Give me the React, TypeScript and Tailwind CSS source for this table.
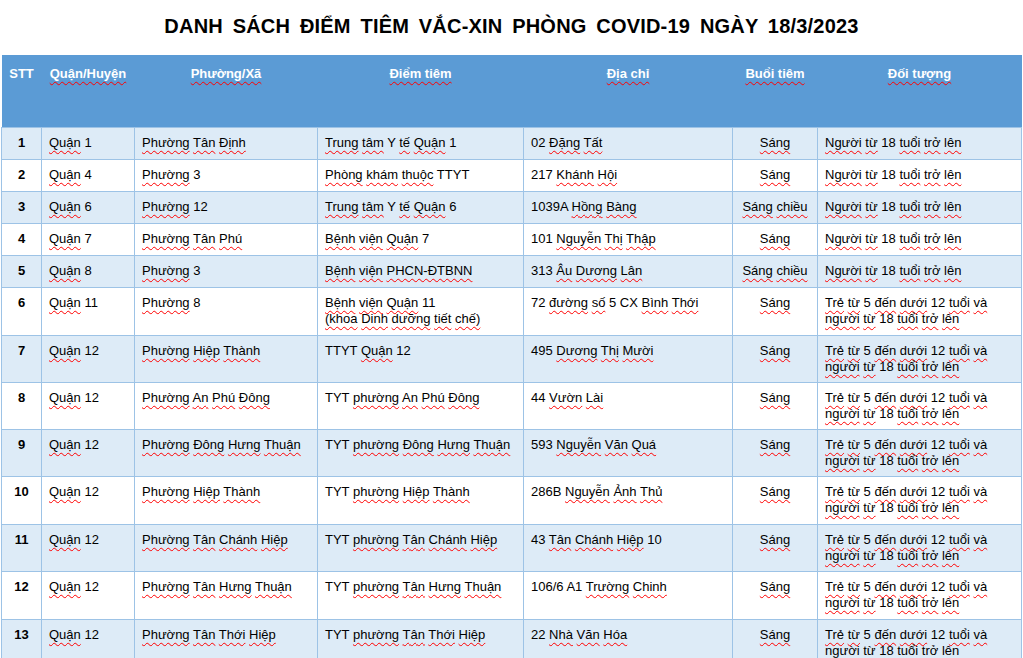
import React from "react";

const W = (text: string) => {
  const tokens = text.split(/(\s+)/);
  return tokens.map((t, i) => {
    if (/^\s+$/.test(t) || t === "") return <React.Fragment key={i}>{t}</React.Fragment>;
    const hasLower = /[a-zà-ỹđ]/.test(t);
    if (hasLower) {
      return (
        <span
          key={i}
          className="underline decoration-wavy decoration-[#ff0000] decoration-[1px] underline-offset-[3px]"
        >
          {t}
        </span>
      );
    }
    return <React.Fragment key={i}>{t}</React.Fragment>;
  });
};

type Row = [string, string, string, string[], string, string, string[]];

const A = ["Người từ 18 tuổi trở lên"];
const B = ["Trẻ từ 5 đến dưới 12 tuổi và", "người từ 18 tuổi trở lên"];

const rows: Row[] = [
  ["1", "Quận 1", "Phường Tân Định", ["Trung tâm Y tế Quận 1"], "02 Đặng Tất", "Sáng", A],
  ["2", "Quận 4", "Phường 3", ["Phòng khám thuộc TTYT"], "217 Khánh Hội", "Sáng", A],
  ["3", "Quận 6", "Phường 12", ["Trung tâm Y tế Quận 6"], "1039A Hồng Bàng", "Sáng chiều", A],
  ["4", "Quận 7", "Phường Tân Phú", ["Bệnh viện Quận 7"], "101 Nguyễn Thị Thập", "Sáng", A],
  ["5", "Quận 8", "Phường 3", ["Bệnh viện PHCN-ĐTBNN"], "313 Âu Dương Lân", "Sáng chiều", A],
  ["6", "Quận 11", "Phường 8", ["Bệnh viện Quận 11", "(khoa Dinh dưỡng tiết chế)"], "72 đường số 5 CX Bình Thới", "Sáng", B],
  ["7", "Quận 12", "Phường Hiệp Thành", ["TTYT Quận 12"], "495 Dương Thị Mười", "Sáng", B],
  ["8", "Quận 12", "Phường An Phú Đông", ["TYT phường An Phú Đông"], "44 Vườn Lài", "Sáng", B],
  ["9", "Quận 12", "Phường Đông Hưng Thuận", ["TYT phường Đông Hưng Thuận"], "593 Nguyễn Văn Quá", "Sáng", B],
  ["10", "Quận 12", "Phường Hiệp Thành", ["TYT phường Hiệp Thành"], "286B Nguyễn Ảnh Thủ", "Sáng", B],
  ["11", "Quận 12", "Phường Tân Chánh Hiệp", ["TYT phường Tân Chánh Hiệp"], "43 Tân Chánh Hiệp 10", "Sáng", B],
  ["12", "Quận 12", "Phường Tân Hưng Thuận", ["TYT phường Tân Hưng Thuận"], "106/6 A1 Trường Chinh", "Sáng", B],
  ["13", "Quận 12", "Phường Tân Thới Hiệp", ["TYT phường Tân Thới Hiệp"], "22 Nhà Văn Hóa", "Sáng", B],
];

const heights = [32, 32, 32, 32, 32, 48, 47, 47, 47, 48, 47, 48, 47];

export default function App() {
  const td = "border border-[#9dc3e6] align-top pt-[7px] px-[7px] leading-[16px] whitespace-nowrap";
  return (
    <div className="w-[1023px] h-[658px] overflow-hidden bg-white text-black font-['Liberation_Sans',Arial,sans-serif]">
      <div className="h-[55px] flex items-center justify-center">
        <h1 className="text-[20px] font-bold tracking-[0.2px] [word-spacing:4px] mt-[-4px]">
          DANH SÁCH ĐIỂM TIÊM VẮC-XIN PHÒNG COVID-19 NGÀY 18/3/2023
        </h1>
      </div>
      <table className="ml-[1px] w-[1020px] table-fixed border-collapse text-[13px]">
        <colgroup>
          <col className="w-[40px]" />
          <col className="w-[93px]" />
          <col className="w-[183px]" />
          <col className="w-[206px]" />
          <col className="w-[209px]" />
          <col className="w-[85px]" />
          <col className="w-[204px]" />
        </colgroup>
        <thead>
          <tr className="h-[72px] bg-[#5b9bd5] text-white font-bold">
            {["STT", "Quận/Huyện", "Phường/Xã", "Điểm tiêm", "Địa chỉ", "Buổi tiêm", "Đối tượng"].map((h, i) => (
              <th key={i} className="align-top pt-[11px] text-center leading-[16px] font-bold border-0">
                {i === 0 ? h : (
                  <span className="underline decoration-wavy decoration-[#ff0000] decoration-[1px] underline-offset-[3px]">{h}</span>
                )}
              </th>
            ))}
          </tr>
        </thead>
        <tbody>
          {rows.map((r, idx) => (
            <tr
              key={idx}
              style={{ height: heights[idx] }}
              className={idx % 2 === 0 ? "bg-[#ddebf7]" : "bg-white"}
            >
              <td className={td + " text-center font-bold"}>{r[0]}</td>
              <td className={td}>{W(r[1])}</td>
              <td className={td}>{W(r[2])}</td>
              <td className={td}>
                {r[3].map((l, i) => (
                  <div key={i}>{W(l)}</div>
                ))}
              </td>
              <td className={td}>{W(r[4])}</td>
              <td className={td + " text-center"}>{W(r[5])}</td>
              <td className={td}>
                {r[6].map((l, i) => (
                  <div key={i}>{W(l)}</div>
                ))}
              </td>
            </tr>
          ))}
        </tbody>
      </table>
    </div>
  );
}
